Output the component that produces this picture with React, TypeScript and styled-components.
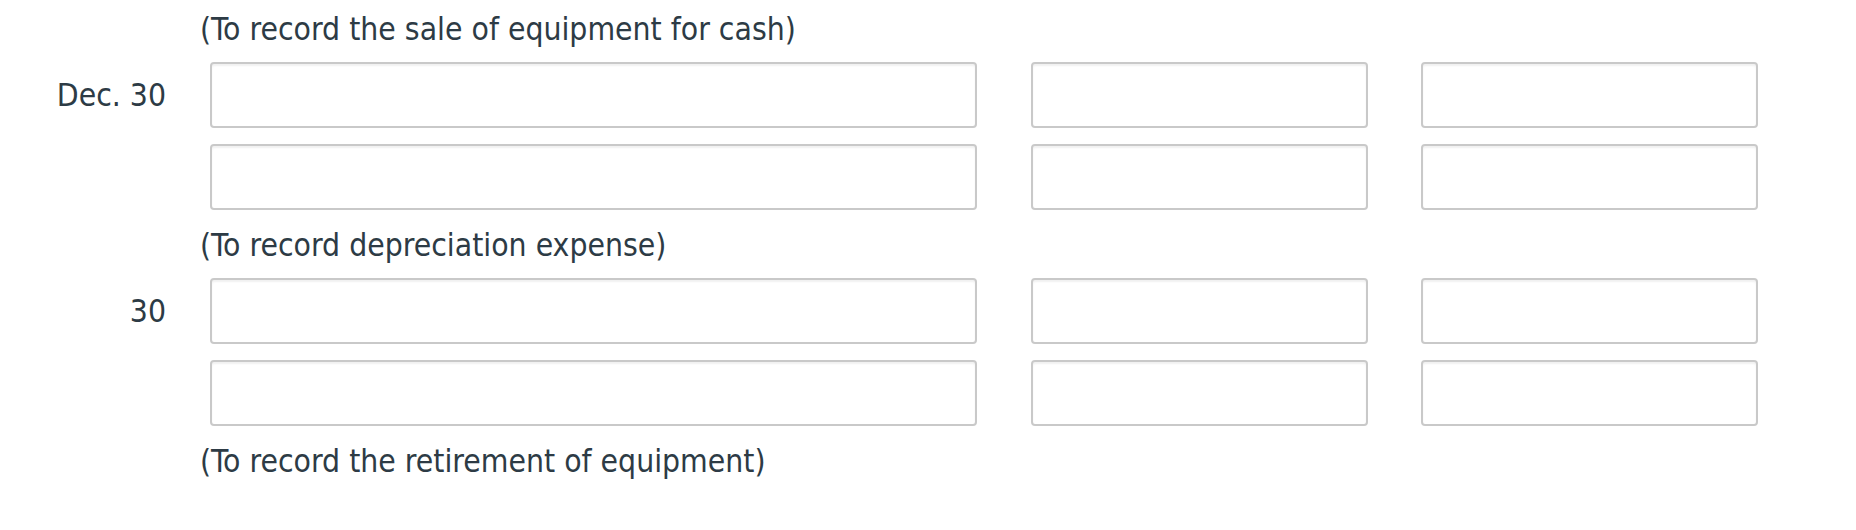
import React from "react";
import styled, { createGlobalStyle } from "styled-components";

const GlobalStyle = createGlobalStyle`
  html, body {
    margin: 0;
    padding: 0;
    background: #ffffff;
  }
  body {
    font-family: "DejaVu Sans Condensed", "DejaVu Sans", sans-serif;
    font-stretch: condensed;
    color: #2d3b45;
  }
`;

const Page = styled.div`
  width: 1856px;
  height: 530px;
  box-sizing: border-box;
  padding-top: 9px;
  background: #ffffff;
  overflow: hidden;
`;

const Caption = styled.div`
  padding-left: 200px;
  font-size: 31.6px;
  line-height: 40px;
  color: #2d3b45;
  margin-bottom: 13px;
  white-space: nowrap;
`;

const Entry = styled.div`
  display: flex;
  flex-direction: column;
  gap: 16px;
  margin-bottom: 15px;
`;

const Row = styled.div`
  display: grid;
  grid-template-columns: 210px 821px 390px 337px;
  align-items: center;
  height: 66px;
`;

const DateCell = styled.div`
  width: 166px;
  text-align: right;
  font-size: 31.6px;
  line-height: 40px;
  color: #2d3b45;
  white-space: nowrap;
`;

const Field = styled.input<{ $w: number }>`
  box-sizing: border-box;
  width: ${(p) => p.$w}px;
  height: 66px;
  margin: 0;
  padding: 0 12px;
  border: 2px solid #c9c9c9;
  border-radius: 4px;
  background: #ffffff;
  box-shadow: inset 0 2px 2px rgba(0, 0, 0, 0.06);
  font-family: inherit;
  font-size: 28px;
  color: #2d3b45;
  outline: none;
`;

type EntryProps = { date: string };

const EntryRows: React.FC<EntryProps> = ({ date }) => (
  <Entry>
    {[0, 1].map((i) => (
      <Row key={i}>
        <DateCell>{i === 0 ? date : ""}</DateCell>
        <Field $w={767} type="text" aria-label="Account" />
        <Field $w={337} type="text" aria-label="Debit" />
        <Field $w={337} type="text" aria-label="Credit" />
      </Row>
    ))}
  </Entry>
);

export default function App() {
  return (
    <>
      <GlobalStyle />
      <Page>
        <Caption>(To record the sale of equipment for cash)</Caption>
        <EntryRows date="Dec. 30" />
        <Caption>(To record depreciation expense)</Caption>
        <EntryRows date="30" />
        <Caption>(To record the retirement of equipment)</Caption>
      </Page>
    </>
  );
}
